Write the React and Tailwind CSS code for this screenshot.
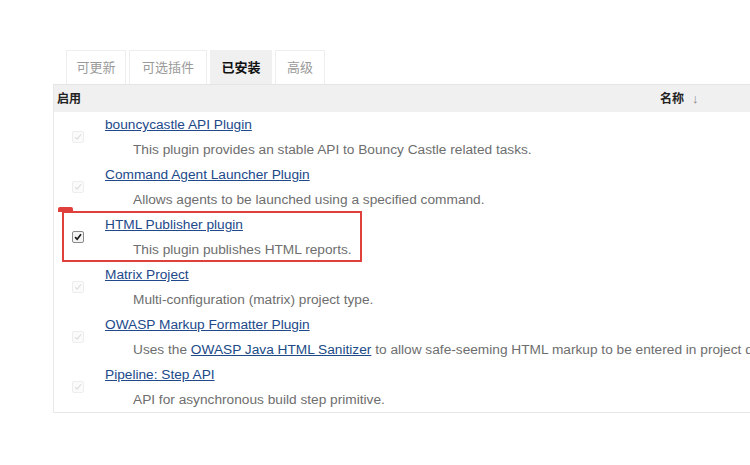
import React from "react"

const plugins = [
  { name: "bouncycastle API Plugin", desc: "This plugin provides an stable API to Bouncy Castle related tasks." },
  { name: "Command Agent Launcher Plugin", desc: "Allows agents to be launched using a specified command." },
  { name: "HTML Publisher plugin", desc: "This plugin publishes HTML reports.", checked: true },
  { name: "Matrix Project", desc: "Multi-configuration (matrix) project type." },
  {
    name: "OWASP Markup Formatter Plugin",
    desc: (
      <>
        Uses the <a className="text-[#204a87] underline" href="#">OWASP Java HTML Sanitizer</a> to allow safe-seeming HTML markup to be entered in project descriptions.
      </>
    ),
  },
  { name: "Pipeline: Step API", desc: "API for asynchronous build step primitive." },
]

const tabs = [
  { label: "可更新", w: "w-[60px]" },
  { label: "可选插件", w: "w-[78px]" },
  { label: "已安装", w: "w-[62px]", active: true },
  { label: "高级", w: "w-[50px]" },
]

function Box({ checked }) {
  return (
    <div
      className={
        "w-[12px] h-[12px] rounded-[2px] border flex items-center justify-center " +
        (checked ? "border-[#8a8a8a] bg-[#f4f4f4]" : "border-[#ededed] bg-[#fbfbfb]")
      }
    >
      <svg viewBox="0 0 12 12" className="w-[10px] h-[10px]">
        <path
          d="M2.5 6.2 L5 8.6 L9.6 2.8"
          fill="none"
          stroke={checked ? "#1a1a1a" : "#dedede"}
          strokeWidth={checked ? 2 : 1.4}
        />
      </svg>
    </div>
  )
}

export default function App() {
  return (
    <div
      className="w-[750px] h-[465px] bg-white overflow-hidden pt-[50px] pl-[53px]"
      style={{ fontFamily: "'Liberation Sans', 'Noto Sans CJK SC', sans-serif" }}
    >
      <div className="flex gap-[3px] pl-[13px]">
        {tabs.map((t) => (
          <div
            key={t.label}
            className={
              "h-[34px] flex items-center justify-center text-[13px] border border-b-0 " +
              t.w +
              (t.active
                ? " bg-[#f0f0f0] border-[#f0f0f0] text-[#111] font-bold"
                : " bg-white border-[#eeeeee] text-[#9a9a9a]")
            }
          >
            {t.label}
          </div>
        ))}
      </div>

      <div className="relative w-[760px] border border-[#e8e8e8] border-t-0">
        <div className="h-[28px] bg-[#f0f0f0] border-t border-[#e4e4e4] flex items-center text-[12px] font-bold text-[#222]">
          <div className="w-[606px] pl-[3px]">启用</div>
          <div className="flex items-center gap-[8px]">
            名称 <span className="font-normal text-[#888] text-[13px]">↓</span>
          </div>
        </div>

        {plugins.map((p) => (
          <div key={p.name} className="h-[50px] flex">
            <div className="w-[51px] shrink-0 flex items-center justify-center pr-[3px]">
              <Box checked={p.checked} />
            </div>
            <div className="flex flex-col pt-[3px] min-w-0 overflow-hidden">
              <a href="#" className="text-[13.7px] leading-[20px] text-[#21498a] underline whitespace-nowrap self-start">
                {p.name}
              </a>
              <div className="pl-[28px] mt-[5px] text-[13.7px] leading-[20px] text-[#6e6e6e] whitespace-nowrap">
                {p.desc}
              </div>
            </div>
          </div>
        ))}

        <div className="absolute left-[8px] top-[127px] w-[300px] h-[51px] border-2 border-[#e0403b]" />
        <div className="absolute left-[4px] top-[123px] w-[15px] h-[5px] bg-[#e0403b] rounded-t-[2px]" />
      </div>
    </div>
  )
}
